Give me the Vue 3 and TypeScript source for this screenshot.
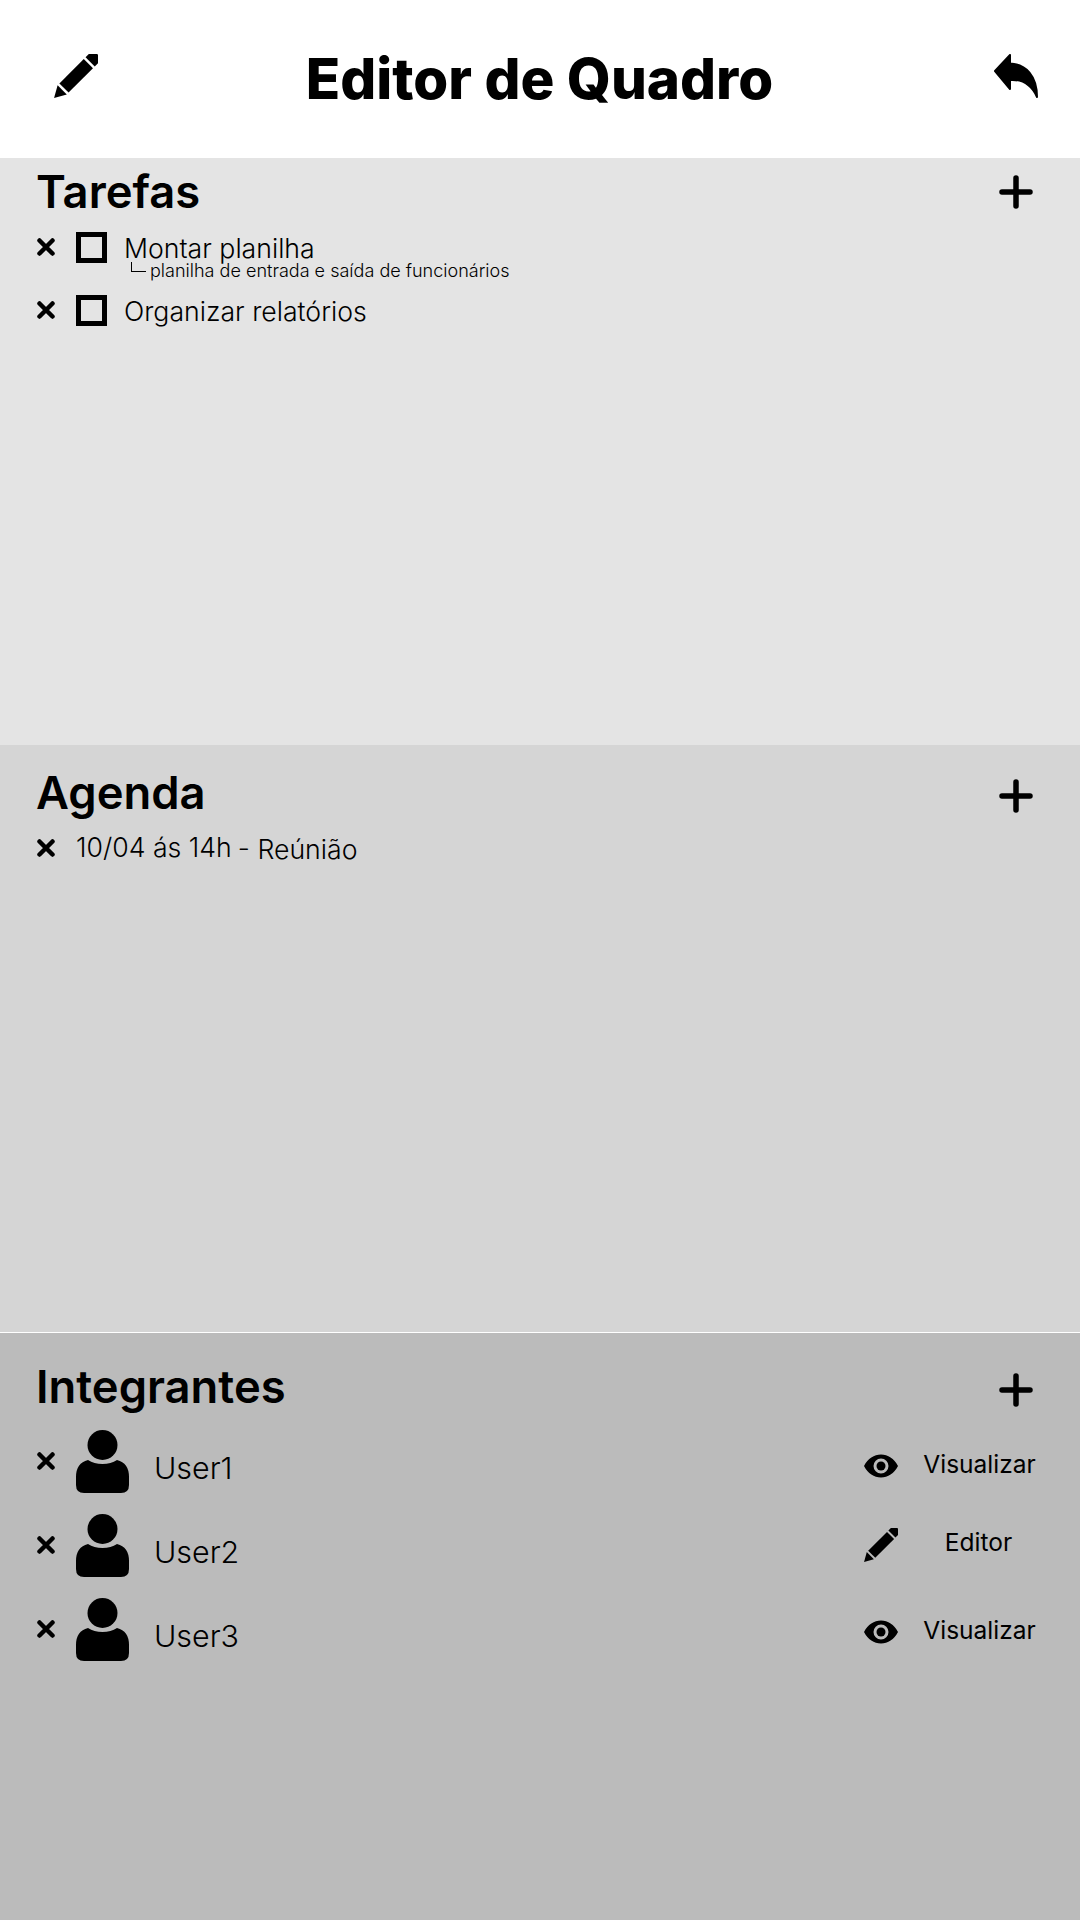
<script setup lang="ts">
interface Task {
  title: string;
  note?: string;
}

interface Member {
  name: string;
  role: "Visualizar" | "Editor";
}

const tasks: Task[] = [
  { title: "Montar planilha", note: "planilha de entrada e saída de funcionários" },
  { title: "Organizar relatórios" },
];

const members: Member[] = [
  { name: "User1", role: "Visualizar" },
  { name: "User2", role: "Editor" },
  { name: "User3", role: "Visualizar" },
];
</script>

<template>
  <div class="page">
    <header class="topbar">
      <svg class="ico-44 ico-pencil" viewBox="0 0 44 44">
        <g transform="translate(22 22) rotate(45)">
          <path d="M-6.5 -17.5H6.5V17H-6.5Z" />
          <path d="M-6.5 19.5H6.5L0 31Z" />
          <path d="M-6.5 -20V-26Q-6.5 -30.5 -2 -30.5H2Q6.5 -30.5 6.5 -26V-20Z" />
        </g>
      </svg>
      <h1 class="title">Editor de Quadro</h1>
      <svg class="ico-44" viewBox="0 0 44 44">
        <path class="reply" d="M1 17L16 1V9.5C32 10 43 22 43 43C38 32 29 25 16 26V35Z" />
      </svg>
    </header>

    <section class="panel panel-tasks">
      <div class="panel-head">
        <h2>Tarefas</h2>
        <svg class="plus" viewBox="0 0 34 34"><path d="M3 17H31M17 3V31" /></svg>
      </div>
      <div class="task" v-for="task in tasks" :key="task.title">
        <svg class="cross" viewBox="0 0 18 18"><path d="M2.5 2.5L15.5 15.5M15.5 2.5L2.5 15.5" /></svg>
        <span class="check"></span>
        <div class="task-body">
          <div class="task-title">{{ task.title }}</div>
          <div class="task-note" v-if="task.note">
            <span class="elbow"></span>
            {{ task.note }}
          </div>
        </div>
      </div>
    </section>

    <section class="panel panel-agenda">
      <div class="panel-head">
        <h2>Agenda</h2>
        <svg class="plus" viewBox="0 0 34 34"><path d="M3 17H31M17 3V31" /></svg>
      </div>
      <div class="event">
        <svg class="cross" viewBox="0 0 18 18"><path d="M2.5 2.5L15.5 15.5M15.5 2.5L2.5 15.5" /></svg>
        <span class="event-date">10/04 ás 14h</span>
        <span class="event-name">- Reúnião</span>
      </div>
    </section>

    <section class="panel panel-members">
      <div class="panel-head">
        <h2>Integrantes</h2>
        <svg class="plus" viewBox="0 0 34 34"><path d="M3 17H31M17 3V31" /></svg>
      </div>
      <div class="members">
        <div class="member-list">
          <div class="member" v-for="member in members" :key="member.name">
            <svg class="cross" viewBox="0 0 18 18"><path d="M2.5 2.5L15.5 15.5M15.5 2.5L2.5 15.5" /></svg>
            <svg class="avatar" viewBox="0 0 53 63">
              <circle cx="26.5" cy="15" r="15" />
              <path d="M12 30Q18 34 26.5 34Q35 34 41 30Q53 33 53 47V55Q53 63 45 63H8Q0 63 0 55V47Q0 33 12 30Z" />
            </svg>
            <span class="member-name">{{ member.name }}</span>
          </div>
        </div>
        <div class="role-list">
          <div class="role" v-for="member in members" :key="member.name" :class="`role-${member.role.toLowerCase()}`">
            <svg v-if="member.role === 'Visualizar'" class="eye" viewBox="0 0 34 24">
              <path
                fill-rule="evenodd"
                d="M0 12C4 4.5 10 0.5 17 0.5S30 4.5 34 12C30 19.5 24 23.5 17 23.5S4 19.5 0 12ZM17 4.5A7.5 7.5 0 1 0 17 19.5A7.5 7.5 0 1 0 17 4.5Z"
              />
              <circle cx="17" cy="12" r="4.5" />
            </svg>
            <svg v-else class="pencil-sm" viewBox="0 0 44 44">
              <g transform="translate(22 22) rotate(45)">
                <path d="M-6.5 -17.5H6.5V17H-6.5Z" />
                <path d="M-6.5 19.5H6.5L0 31Z" />
                <path d="M-6.5 -20V-26Q-6.5 -30.5 -2 -30.5H2Q6.5 -30.5 6.5 -26V-20Z" />
              </g>
            </svg>
            <span class="role-name">{{ member.role }}</span>
          </div>
        </div>
      </div>
    </section>
  </div>
</template>

<style>
html,
body {
  margin: 0;
  background: #fff;
}
</style>

<style scoped>
.page {
  display: flex;
  flex-direction: column;
  width: 1080px;
  height: 1920px;
  overflow: hidden;
  color: #000;
  font-family: Inter, "Liberation Sans", sans-serif;
}

.topbar {
  display: flex;
  align-items: center;
  justify-content: space-between;
  height: 158px;
  padding: 0 42px 0 54px;
  box-sizing: border-box;
  flex: none;
}

.ico-44 {
  width: 44px;
  height: 44px;
  margin-bottom: 6px;
}

.title {
  margin: 0 0 0 -13px;
  font-size: 56.5px;
  font-weight: 800;
  line-height: 60px;
}

.reply {
  stroke: #000;
  stroke-width: 2;
  stroke-linejoin: round;
}

.panel {
  height: 587px;
  flex: none;
  box-sizing: border-box;
  padding-left: 36px;
  padding-right: 47px;
}

.panel-tasks {
  background: #e4e4e4;
  padding-top: 9px;
}

.panel-agenda {
  background: #d5d5d5;
  padding-top: 23px;
}

.panel-members {
  background: #bbbbbb;
  border-top: 1px solid #fff;
  height: 588px;
  padding-top: 29px;
}

.panel-head {
  display: flex;
  align-items: center;
  justify-content: space-between;
  height: 50px;
}

.panel-head h2 {
  margin: 0;
  font-size: 45.33px;
  font-weight: 600;
  line-height: 50px;
}

.plus {
  width: 34px;
  height: 34px;
  flex: none;
}

.panel-agenda .plus,
.panel-members .plus {
  margin-top: 6px;
}

.plus path {
  fill: none;
  stroke: #000;
  stroke-width: 5.5;
  stroke-linecap: round;
}

.cross {
  width: 18px;
  height: 18px;
  flex: none;
  margin-left: 1px;
}

.cross path {
  fill: none;
  stroke: #000;
  stroke-width: 4.5;
  stroke-linecap: round;
}

.task {
  display: flex;
  align-items: flex-start;
  height: 63px;
  margin-top: 15px;
}

.task + .task {
  margin-top: 0;
}

.task .cross {
  margin-top: 6px;
}

.check {
  width: 31px;
  height: 31px;
  box-sizing: border-box;
  border: 5px solid #000;
  margin-left: 21px;
  flex: none;
}

.task-body {
  margin-left: 17px;
}

.task-title {
  font-size: 26.67px;
  font-weight: 300;
  line-height: 32px;
}

.task-note {
  display: flex;
  align-items: center;
  margin-top: -4px;
  font-size: 18.05px;
  font-weight: 300;
  line-height: 22px;
}

.elbow {
  width: 14px;
  height: 9px;
  margin: 0 4px 8px 7px;
  border-left: 1px solid #000;
  border-bottom: 1px solid #000;
}

.event {
  display: flex;
  align-items: flex-start;
  margin-top: 13px;
}

.event .cross {
  margin-top: 8px;
}

.event-date {
  margin-left: 21px;
  font-size: 26.67px;
  font-weight: 300;
  line-height: 32px;
}

.event-name {
  margin-left: 6px;
  margin-top: 2px;
  font-size: 26.67px;
  font-weight: 300;
  line-height: 32px;
}

.members {
  display: flex;
  justify-content: space-between;
}

.member-list {
  margin-top: 18px;
}

.member {
  display: flex;
  align-items: flex-start;
  height: 84px;
}

.member .cross {
  margin-top: 22px;
}

.avatar {
  width: 53px;
  height: 63px;
  margin-left: 21px;
  flex: none;
}

.member-name {
  margin-left: 25px;
  margin-top: 20px;
  font-size: 30.4px;
  font-weight: 300;
  line-height: 36px;
}

.role-list {
  display: flex;
  flex-direction: column;
  margin-top: 37px;
  margin-right: -9px;
}

.role {
  display: flex;
  align-items: center;
  height: 30px;
}

.role + .role {
  margin-top: 48px;
}

.role-editor + .role {
  margin-top: 58px;
}

.eye {
  width: 34px;
  height: 24px;
  margin-top: 4px;
  flex: none;
}

.pencil-sm {
  width: 34px;
  height: 34px;
  margin-top: 6px;
  flex: none;
}

.role-name {
  width: 125px;
  margin-left: 19px;
  font-size: 24.5px;
  font-weight: 400;
  line-height: 30px;
  text-align: center;
}

.role-editor .role-name {
  margin-left: 18px;
}
</style>
